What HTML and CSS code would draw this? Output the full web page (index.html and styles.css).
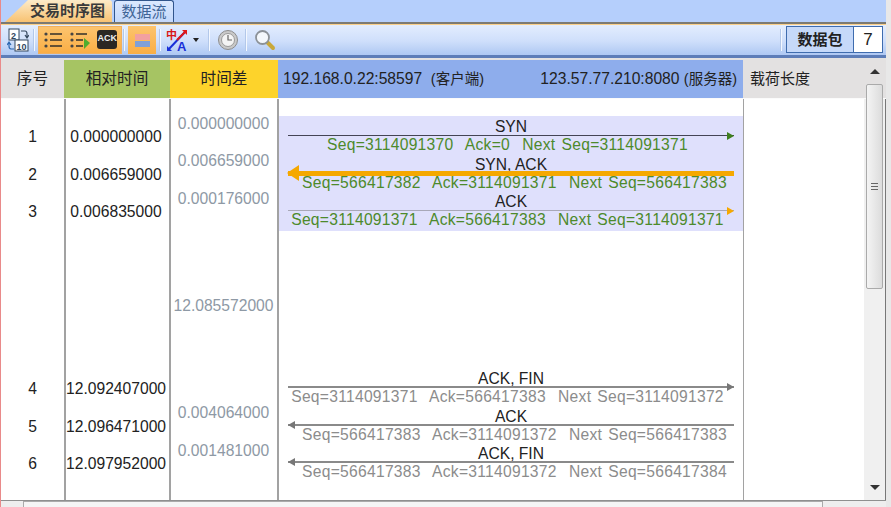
FILE: index.html
```html
<!DOCTYPE html>
<html lang="zh">
<head>
    <meta charset="UTF-8">
    <title>交易时序图</title>
    <link rel="stylesheet" href="styles.css">
</head>
<body>
<div class="app">
    <div class="tabs">
        <div class="tab tab-active">交易时序图</div>
        <div class="tab">数据流</div>
    </div>

    <div class="toolbar">
        <svg class="icon icon-swap" width="22" height="24" viewBox="0 0 22 24">
            <rect x="2" y="1" width="10" height="11" fill="#fff" stroke="#33475f"/>
            <text x="4" y="10.5" class="icon-num">2</text>
            <rect x="8" y="12" width="13" height="11" fill="#fff" stroke="#33475f"/>
            <text x="9.5" y="21.5" class="icon-num">10</text>
            <path d="M14 3h4q2 0 2 3v3M18 7l2 3 2-3" fill="none" stroke="#33475f" stroke-width="1.2"/>
            <path d="M7 21H4q-2 0-2-3v-3M0 17l2-3 2 3" fill="none" stroke="#2a66b0" stroke-width="1.2"/>
        </svg>
        <span class="sep sep-first"></span>
        <div class="btn-group">
            <span class="btn">
                <svg width="20" height="20" viewBox="0 0 20 20">
                    <g fill="#444"><circle cx="3" cy="4" r="1.6"/><circle cx="3" cy="10" r="1.6"/><circle cx="3" cy="16" r="1.6"/></g>
                    <path d="M7 4h12M7 10h12M7 16h12" stroke="#33302a" stroke-width="1.4"/>
                </svg>
            </span>
            <span class="btn">
                <svg width="22" height="20" viewBox="0 0 22 20">
                    <g fill="#444"><circle cx="3" cy="4" r="1.6"/><circle cx="3" cy="10" r="1.6"/><circle cx="3" cy="16" r="1.6"/></g>
                    <path d="M7 4h11M7 10h7M7 16h7" stroke="#33302a" stroke-width="1.4"/>
                    <path d="M15 8l6 5-6 6z" fill="#4fae2e"/>
                </svg>
            </span>
            <span class="btn">
                <span class="ack-icon">ACK</span>
            </span>
        </div>
        <span class="sep"></span>
        <span class="btn btn-single">
            <svg width="18" height="20" viewBox="0 0 18 20">
                <rect x="2" y="4" width="15" height="6" fill="#f2a0a0"/>
                <rect x="2" y="11" width="15" height="6" fill="#7fa0d8"/>
            </svg>
        </span>
        <span class="sep sep-tight"></span>
        <svg class="icon" width="22" height="28" viewBox="0 -2 22 28">
            <text x="0" y="11" class="icon-zh">中</text>
            <text x="11" y="23" class="icon-a">A</text>
            <path d="M2 22L20 3" stroke="#1a30d8" stroke-width="2"/>
            <path d="M11 12L20 3" stroke="#e01818" stroke-width="2"/>
            <path d="M16 2h5v5z" fill="#e01818"/>
            <path d="M1 23v-5l5 5z" fill="#1a30d8"/>
        </svg>
        <span class="caret"></span>
        <span class="sep sep-mid"></span>
        <svg class="icon" width="22" height="22" viewBox="0 0 22 22">
            <circle cx="11" cy="11" r="9.5" fill="#c9c9c9" stroke="#8d8d8d"/>
            <circle cx="11" cy="11" r="6.5" fill="#f4f4f4" stroke="#9a9a9a"/>
            <path d="M11 6v5h4" fill="none" stroke="#666" stroke-width="1.2"/>
        </svg>
        <span class="sep sep-mid"></span>
        <svg class="icon" width="22" height="22" viewBox="0 0 22 22">
            <path d="M13 13l6 6" stroke="#c8a83a" stroke-width="4" stroke-linecap="round"/>
            <circle cx="8.5" cy="8.5" r="6.5" fill="#f4f8fc" stroke="#8c9298" stroke-width="1.8"/>
        </svg>
        <span class="sep sep-end"></span>
        <div class="counter">
            <span class="counter-label">数据包</span>
            <span class="counter-value">7</span>
        </div>
    </div>

    <div class="grid-head">
        <div class="head head-no">序号</div>
        <div class="head head-rel">相对时间</div>
        <div class="head head-delta">时间差</div>
        <div class="head head-flow">
            <span>192.168.0.22:58597&nbsp; <span class="host-kind">(客户端)</span></span>
            <span>123.57.77.210:8080 <span class="host-kind">(服务器)</span></span>
        </div>
        <div class="head head-len">载荷长度</div>
    </div>

    <div class="grid-body">
        <div class="col col-no">
            <div class="cell">1</div>
            <div class="cell">2</div>
            <div class="cell">3</div>
            <div class="cell group-start">4</div>
            <div class="cell">5</div>
            <div class="cell">6</div>
        </div>
        <div class="col col-rel">
            <div class="cell">0.000000000</div>
            <div class="cell">0.006659000</div>
            <div class="cell">0.006835000</div>
            <div class="cell group-start">12.092407000</div>
            <div class="cell">12.096471000</div>
            <div class="cell">12.097952000</div>
        </div>
        <div class="col col-delta">
            <div class="cell">0.000000000</div>
            <div class="cell">0.006659000</div>
            <div class="cell">0.000176000</div>
            <div class="cell delta-gap">12.085572000</div>
            <div class="cell delta-gap">0.004064000</div>
            <div class="cell">0.001481000</div>
        </div>
        <div class="col col-flow">
            <div class="band">
                <div class="flow flow-right">
                    <div class="flow-name">SYN</div>
                    <div class="flow-line line-green"></div>
                    <div class="flow-info">Seq=3114091370&nbsp; Ack=0&nbsp; Next Seq=3114091371</div>
                </div>
                <div class="flow flow-left">
                    <div class="flow-name">SYN, ACK</div>
                    <div class="flow-line line-orange line-thick"></div>
                    <div class="flow-info">Seq=566417382&nbsp; Ack=3114091371&nbsp; Next Seq=566417383</div>
                </div>
                <div class="flow flow-right">
                    <div class="flow-name">ACK</div>
                    <div class="flow-line line-orange"></div>
                    <div class="flow-info">Seq=3114091371&nbsp; Ack=566417383&nbsp; Next Seq=3114091371</div>
                </div>
            </div>
            <div class="band-plain">
                <div class="flow flow-right flow-gray">
                    <div class="flow-name">ACK, FIN</div>
                    <div class="flow-line line-gray"></div>
                    <div class="flow-info">Seq=3114091371&nbsp; Ack=566417383&nbsp; Next Seq=3114091372</div>
                </div>
                <div class="flow flow-left flow-gray">
                    <div class="flow-name">ACK</div>
                    <div class="flow-line line-gray"></div>
                    <div class="flow-info">Seq=566417383&nbsp; Ack=3114091372&nbsp; Next Seq=566417383</div>
                </div>
                <div class="flow flow-left flow-gray">
                    <div class="flow-name">ACK, FIN</div>
                    <div class="flow-line line-gray"></div>
                    <div class="flow-info">Seq=566417383&nbsp; Ack=3114091372&nbsp; Next Seq=566417384</div>
                </div>
            </div>
        </div>
        <div class="col col-len"></div>
        <div class="vscroll">
            <span class="arrow-up"></span>
            <div class="vthumb"><span class="vgrip"></span></div>
            <span class="arrow-down"></span>
        </div>
    </div>

    <div class="hscroll">
        <div class="hthumb"></div>
    </div>
</div>
</body>
</html>
```

FILE: styles.css
```css
* {
    box-sizing: border-box;
}
html, body {
    margin: 0;
    height: 100%;
    overflow: hidden;
}
body {
    background-color: #b5cffc;
    color: #222;
    font-family: "Liberation Sans", "Noto Sans CJK SC", sans-serif;
    font-size: 15.65px;
}
.app {
    border-left: 1px solid #e98a8a;
    border-right: 5px solid #e8e8e8;
    display: flex;
    flex-direction: column;
    height: 507px;
    width: 891px;
}

/* tabs */
.tabs {
    display: flex;
    gap: 2px;
    height: 22px;
    padding-left: 4px;
}
.tab {
    background: linear-gradient(#dbe8fe, #c3d8fb);
    border: 1px solid #31558c;
    border-bottom: none;
    border-radius: 3px 3px 0 0;
    color: #3f6496;
    font-size: 15px;
    line-height: 21px;
    text-align: center;
    width: 60px;
}
.tab-active {
    background: linear-gradient(#fdebc8, #f8c272);
    border: none;
    clip-path: polygon(0 100%, 23px 0, 100% 0, 100% 100%);
    color: #3a3a3a;
    font-weight: bold;
    padding-left: 18px;
    width: 107px;
}

/* toolbar */
.toolbar {
    align-items: center;
    background: linear-gradient(#e4eefe, #cfdffb 55%, #aec8f3);
    border-top: 2px solid #7c7a72;
    border-bottom: 3px solid #5d7db8;
    box-shadow: inset 0 1px 0 #fbd08a;
    display: flex;
    height: 36px;
    padding: 0 3px 0 6px;
}
.icon {
    flex: none;
}
.icon-num {
    fill: #33475f;
    font-size: 9px;
    font-weight: bold;
}
.icon-zh {
    fill: #d81818;
    font-size: 11px;
    font-weight: bold;
}
.icon-a {
    fill: #1a30d8;
    font-size: 13px;
    font-weight: bold;
}
.sep {
    background-color: #b3c8ea;
    border-right: 1px solid #f4f8ff;
    flex: none;
    height: 22px;
    margin: 0 3px 0 1px;
    width: 2px;
}
.sep-first {
    margin: 0 3px 0 4px;
}
.sep-tight {
    margin: 0 5px 0 3px;
}
.sep-mid {
    margin: 0 7px 0 6px;
}
.btn-group {
    background-color: #fbb653;
    border: 1px solid #f0b060;
    display: flex;
    height: 28px;
    width: 84px;
}
.btn {
    align-items: center;
    background: linear-gradient(#fcc46e, #faae45);
    display: flex;
    flex: 1;
    justify-content: center;
}
.btn-single {
    flex: none;
    height: 28px;
    width: 28px;
}
.ack-icon {
    background-color: #2b2723;
    border-radius: 3px;
    color: #eee;
    font-size: 9px;
    font-weight: bold;
    height: 19px;
    line-height: 17px;
    text-align: center;
    width: 20px;
}
.caret {
    border-left: 3.5px solid transparent;
    border-right: 3.5px solid transparent;
    border-top: 4px solid #222;
    margin-left: 5px;
    margin-right: 3px;
}
.sep-end {
    margin-left: auto;
}
.counter {
    border: 1px solid #3f6cae;
    display: flex;
    font-size: 15px;
    height: 27px;
    line-height: 25px;
    margin-left: 1px;
    width: 97px;
}
.counter-label {
    background-color: #c6d9f9;
    border-right: 1px solid #3f6cae;
    color: #222;
    font-weight: bold;
    text-align: center;
    width: 67px;
}
.counter-value {
    background-color: #fff;
    flex: 1;
    font-size: 17px;
    text-align: center;
}

/* column headers */
.grid-head {
    background-color: #e3e1e1;
    display: flex;
    flex: none;
    font-size: 15.65px;
    height: 40px;
    line-height: 38px;
    padding-top: 2px;
}
.head {
    height: 38px;
    text-align: center;
}
.head-no {
    width: 63px;
}
.head-rel {
    background-color: #a6c463;
    width: 106px;
}
.head-delta {
    background-color: #fdd32b;
    width: 108px;
}
.head-flow {
    background-color: #8eadec;
    display: flex;
    justify-content: space-between;
    padding: 0 6px 0 5px;
    width: 465px;
}
.host-kind {
    font-size: 14.5px;
}
.head-len {
    font-size: 15px;
    padding-left: 7px;
    text-align: left;
    width: 120px;
}

/* body */
.grid-body {
    background-color: #fff;
    border-top: 1px solid #fbfbfb;
    display: flex;
    flex: 1;
    min-height: 0;
}
.col {
    border-right: 2px solid #a2a2a2;
    flex: none;
}
.col-no {
    border-right: none;
    text-align: center;
    width: 63px;
}
.col-rel {
    border-left: 2px solid #a2a2a2;
    padding-right: 3px;
    text-align: center;
    width: 107px;
}
.col-delta {
    color: #8e99a5;
    padding-right: 1px;
    padding-top: 5.5px;
    text-align: center;
    width: 108px;
}
.col-no, .col-rel {
    padding-top: 19px;
}
.col-flow {
    border-right-width: 1px;
    width: 465px;
}
.col-len {
    border-right: none;
    width: 120px;
}
.cell {
    height: 37.67px;
    line-height: 37.67px;
}
.group-start {
    margin-top: 139px;
}
.delta-gap {
    margin-top: 69.5px;
}
.band {
    background-color: #dfe0fc;
    height: 115px;
    margin-top: 17px;
    padding-top: 2px;
}
.band-plain {
    margin-top: 138px;
}
.band-plain .flow-name {
    line-height: 19px;
}
.flow {
    height: 37.67px;
    line-height: 18px;
    padding: 0 9px;
    text-align: center;
}
.flow-name {
    height: 17px;
}
.flow-info {
    color: #4d8a2b;
    letter-spacing: .26px;
    margin: 0 -6px;
    white-space: nowrap;
    word-spacing: 1.5px;
}
.flow-right .flow-info {
    padding-right: 7px;
}
.flow-left .flow-info {
    padding-left: 7px;
}
.flow-gray .flow-info {
    color: #8c8c8c;
}
.flow-line {
    background-color: #555;
    height: 1px;
    position: relative;
}
.flow-line::after {
    border-bottom: 4px solid transparent;
    border-top: 4px solid transparent;
    content: "";
    position: absolute;
    top: -3.5px;
}
.flow-right .flow-line::after {
    border-left: 7px solid #3f7f1e;
    right: 0;
}
.flow-left .flow-line::after {
    border-right: 7px solid #555;
    left: 0;
}
.line-green {
    background-color: #445;
}
.line-orange {
    background-color: #a8a8b8;
}
.flow-right .line-orange::after {
    border-left-color: #f5a800;
}
.line-thick {
    background-color: #f5a800;
    height: 5px;
    margin-top: -2px;
    margin-bottom: -2px;
}
.flow-left .line-thick::after {
    border-bottom-width: 8px;
    border-right: 12px solid #f5a800;
    border-top-width: 8px;
    left: -1px;
    top: -5.5px;
}
.line-gray {
    background-color: #8a8a8a;
    height: 2px;
}
.flow-right .line-gray::after {
    border-left-color: #777;
    top: -3px;
}
.flow-left .line-gray::after {
    border-right-color: #777;
    top: -3px;
}

/* scrollbars */
.vscroll {
    background-color: #f0f0f0;
    border-right: 1px solid #777;
    flex: none;
    position: relative;
    width: 22px;
}
.arrow-up, .arrow-down {
    border-left: 5px solid transparent;
    border-right: 5px solid transparent;
    left: 6px;
    position: absolute;
}
.arrow-up {
    border-bottom: 5px solid #333;
    top: -30px;
}
.arrow-down {
    border-top: 5px solid #333;
    bottom: 10px;
}
.vthumb {
    align-items: center;
    background: linear-gradient(90deg, #f4f4f4, #dcdcdc);
    border: 1px solid #aaa;
    border-radius: 2px;
    display: flex;
    height: 205px;
    justify-content: center;
    margin: -15px 0 0 2px;
    position: relative;
    width: 17px;
}
.vgrip {
    background: linear-gradient(#666, #666) center / 100% 1px no-repeat;
    border-bottom: 1px solid #666;
    border-top: 1px solid #666;
    height: 7px;
    width: 7px;
}
.hscroll {
    background-color: #eee;
    border-top: 1px solid #8f8f8f;
    flex: none;
    height: 7px;
    padding-left: 22px;
}
.hthumb {
    background-color: #f5f5f5;
    border: 1px solid #aaa;
    height: 8px;
    width: 800px;
}
```
